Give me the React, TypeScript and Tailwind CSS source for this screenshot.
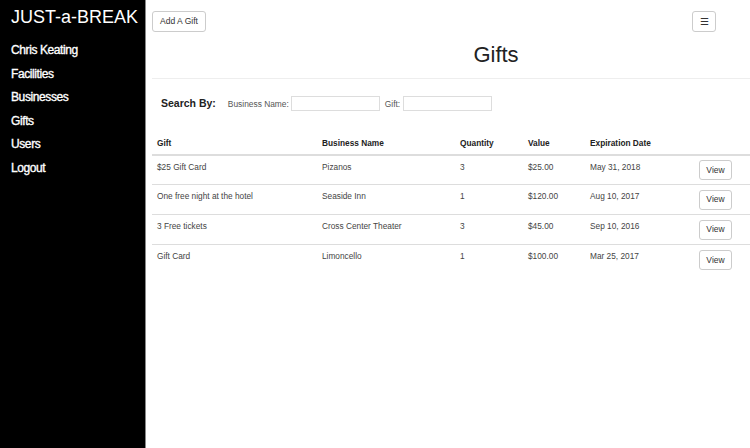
const GIFTS = [
  { gift: '$25 Gift Card', business: 'Pizanos', qty: 3, value: '$25.00', expires: 'May 31, 2018' },
  { gift: 'One free night at the hotel', business: 'Seaside Inn', qty: 1, value: '$120.00', expires: 'Aug 10, 2017' },
  { gift: '3 Free tickets', business: 'Cross Center Theater', qty: 3, value: '$45.00', expires: 'Sep 10, 2016' },
  { gift: 'Gift Card', business: 'Limoncello', qty: 1, value: '$100.00', expires: 'Mar 25, 2017' },
];

const NAV = ['Chris Keating', 'Facilities', 'Businesses', 'Gifts', 'Users', 'Logout'];

export default function App() {
  return (
    <div className="flex h-[448px] w-[750px] overflow-hidden bg-white font-['Liberation_Sans',Arial,sans-serif] text-[#333]">
      {/* Sidebar */}
      <aside className="w-[146px] shrink-0 border-r border-[#888] bg-black pl-[11px] pt-[6px]">
        <h1 className="whitespace-nowrap text-[18px] leading-[22px] text-white">JUST-a-BREAK</h1>
        <nav className="mt-[11px] flex flex-col">
          {NAV.map((item) => (
            <a key={item} className="text-[12px] leading-[23.5px] tracking-[-0.4px] text-white [-webkit-text-stroke:0.35px_white]">
              {item}
            </a>
          ))}
        </nav>
      </aside>

      {/* Main */}
      <main className="flex-1 pl-[6px]">
        <div className="flex items-start justify-between pt-[11px] pr-[34px]">
          <button className="h-[21px] w-[54px] rounded-[3px] border border-[#ccc] bg-white text-[8.5px] text-[#333]">
            Add A Gift
          </button>
          <button className="flex h-[21px] w-[24px] items-center justify-center rounded-[3px] border border-[#ccc] bg-white text-[10px] text-[#333]">
            ☰
          </button>
        </div>

        <h2 className="mt-[10px] pl-[90px] text-center text-[22px] leading-[26px] text-[#222]">Gifts</h2>

        <div className="mt-[10px] border-t border-[#eee]" />

        <div className="mt-[17px] flex items-center pl-[9px]">
          <span className="text-[10.5px] font-bold text-[#222]">Search By:</span>
          <label className="ml-[12px] text-[8.4px] text-[#555]">Business Name:</label>
          <input className="ml-[2px] h-[15px] w-[89px] border border-[#ddd] bg-white" />
          <label className="ml-[5px] text-[8.4px] text-[#555]">Gift:</label>
          <input className="ml-[3px] h-[15px] w-[89px] border border-[#ddd] bg-white" />
        </div>

        <table className="mt-[25px] w-full table-fixed border-collapse text-left text-[8.3px]">
          <colgroup>
            <col className="w-[165px]" />
            <col className="w-[138px]" />
            <col className="w-[68px]" />
            <col className="w-[62px]" />
            <col className="w-[109px]" />
            <col />
          </colgroup>
          <thead>
            <tr className="border-b-2 border-[#ddd]">
              <th className="h-[18px] px-[5px] pb-[4px] align-bottom font-bold text-[#222]">Gift</th>
              <th className="px-[5px] pb-[4px] align-bottom font-bold text-[#222]">Business Name</th>
              <th className="px-[5px] pb-[4px] align-bottom font-bold text-[#222]">Quantity</th>
              <th className="px-[5px] pb-[4px] align-bottom font-bold text-[#222]">Value</th>
              <th className="px-[5px] pb-[4px] align-bottom font-bold text-[#222]">Expiration Date</th>
              <th />
            </tr>
          </thead>
          <tbody>
            {GIFTS.map((g) => (
              <tr key={g.gift} className="h-[30px] border-t border-[#ddd] text-[#444]">
                <td className="px-[5px] pt-[5px] align-top">{g.gift}</td>
                <td className="px-[5px] pt-[5px] align-top">{g.business}</td>
                <td className="px-[5px] pt-[5px] align-top">{g.qty}</td>
                <td className="px-[5px] pt-[5px] align-top">{g.value}</td>
                <td className="px-[5px] pt-[5px] align-top">{g.expires}</td>
                <td className="pl-[5px] align-middle">
                  <button className="h-[20px] w-[33px] rounded-[3px] border border-[#ccc] bg-white text-[8.5px] text-[#333]">
                    View
                  </button>
                </td>
              </tr>
            ))}
          </tbody>
        </table>
      </main>
    </div>
  );
}
